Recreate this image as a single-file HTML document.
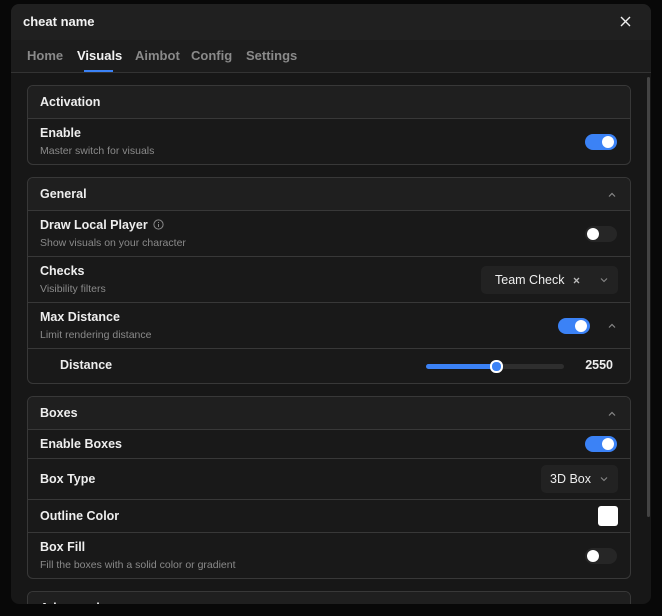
<!DOCTYPE html><html><head><style>
body{margin:0;width:662px;height:616px;background:#080808;font-family:"Liberation Sans",sans-serif;position:relative;overflow:hidden;color:#eee}
.win{position:absolute;left:11px;top:4px;width:640px;height:600px;background:#171717;border-radius:8px;overflow:hidden}
.title{height:36px;background:#202020;font-size:13px;font-weight:bold;line-height:36px;padding-left:12px;color:#f2f2f2;position:relative}
.x{position:absolute;right:20px;top:12px}
.tabs{height:32px;background:#1c1c1c;border-bottom:1px solid #333;position:relative;font-size:13px;font-weight:bold}
.tabs span{position:absolute;top:8px;color:#8a8a8a}
.tabs .a{color:#f2f2f2}
.ul{position:absolute;left:73px;top:30px;width:29px;height:2px;background:#3b82f6}
.card{position:absolute;left:16px;width:602px;border:1px solid #383838;border-radius:6px;background:#191919;overflow:hidden}
.hd{height:32px;background:#1f1f1f;border-bottom:1px solid #383838;font-size:12.5px;font-weight:bold;line-height:32px;padding-left:12px;position:relative}
.row{position:relative;border-bottom:1px solid #383838;padding-left:12px}
.row:last-child{border-bottom:none}
.t{font-size:12.5px;font-weight:bold;color:#eee;position:absolute;left:12px}
.s{font-size:10.5px;color:#8a8a8a;position:absolute;left:12px}
.tg{position:absolute;right:13px;width:32px;height:16px;border-radius:8px;background:#3b82f6}
.tg::after{content:"";position:absolute;right:3px;top:2px;width:12px;height:12px;border-radius:6px;background:#fff}
.tg.off{background:#262626}
.tg.off::after{left:2px;right:auto}
.car{position:absolute;right:14px;width:8px;height:5px}
</style></head><body>
<div class="win">
<div class="title">cheat name<svg class="x" width="11" height="11" viewBox="0 0 11 11"><path d="M1 1L10 10M10 1L1 10" stroke="#eee" stroke-width="1.4"/></svg></div>
<div class="tabs"><span style="left:16px">Home</span><span class="a" style="left:66px">Visuals</span><span style="left:124px">Aimbot</span><span style="left:180px">Config</span><span style="left:235px">Settings</span><div class="ul"></div></div>

<div class="card" style="top:81px;height:78px">
<div class="hd">Activation</div>
<div class="row" style="height:45px"><div class="t" style="top:7px">Enable</div><div class="s" style="top:26px">Master switch for visuals</div><div class="tg" style="top:15px"></div></div>
</div>

<div class="card" style="top:173px;height:205px">
<div class="hd">General<svg class="car" style="top:14px" viewBox="0 0 8 5"><path d="M1 4.5L4 1.5L7 4.5" fill="none" stroke="#888" stroke-width="1.2"/></svg></div>
<div class="row" style="height:45px"><div class="t" style="top:7px">Draw Local Player <svg width="11" height="11" viewBox="0 0 11 11" style="vertical-align:-1px;margin-left:2px"><circle cx="5.5" cy="5.5" r="4.6" fill="none" stroke="#888"/><path d="M5.5 5v3M5.5 3v1" stroke="#888"/></svg></div><div class="s" style="top:26px">Show visuals on your character</div><div class="tg off" style="top:15px"></div></div>
<div class="row" style="height:45px"><div class="t" style="top:7px">Checks</div><div class="s" style="top:26px">Visibility filters</div>
<div style="position:absolute;right:12px;top:9px;width:137px;height:28px;background:#222;border-radius:5px;font-size:12.5px;line-height:28px;color:#eee"><span style="position:absolute;left:14px">Team Check</span><svg style="position:absolute;left:92px;top:11px" width="7" height="7" viewBox="0 0 7 7"><path d="M1 1L6 6M6 1L1 6" stroke="#bbb" stroke-width="1.3"/></svg><svg style="position:absolute;left:119px;top:12px" width="8" height="5" viewBox="0 0 8 5"><path d="M1 .5L4 3.5L7 .5" fill="none" stroke="#888" stroke-width="1.1"/></svg></div></div>
<div class="row" style="height:45px"><div class="t" style="top:7px">Max Distance</div><div class="s" style="top:26px">Limit rendering distance</div><div class="tg" style="top:15px;right:40px"></div><svg class="car" style="top:20px" viewBox="0 0 8 5"><path d="M1 4.5L4 1.5L7 4.5" fill="none" stroke="#888" stroke-width="1.2"/></svg></div>
<div class="row" style="height:35px"><div class="t" style="top:9px;left:32px;font-weight:bold">Distance</div>
<div style="position:absolute;left:398px;top:15px;width:138px;height:5px;border-radius:3px;background:#2e2e2e"><div style="width:70px;height:5px;border-radius:3px;background:#3b82f6"></div><div style="position:absolute;left:64px;top:-4px;width:9px;height:9px;border-radius:6px;background:#3b82f6;border:2px solid #fff"></div></div>
<div style="position:absolute;right:17px;top:9px;font-size:12.5px;font-weight:bold">2550</div></div>
</div>

<div class="card" style="top:392px;height:181px">
<div class="hd">Boxes<svg class="car" style="top:14px" viewBox="0 0 8 5"><path d="M1 4.5L4 1.5L7 4.5" fill="none" stroke="#888" stroke-width="1.2"/></svg></div>
<div class="row" style="height:28px"><div class="t" style="top:7px">Enable Boxes</div><div class="tg" style="top:6px"></div></div>
<div class="row" style="height:40px"><div class="t" style="top:13px">Box Type</div><div style="position:absolute;right:12px;top:6px;width:77px;height:28px;background:#222;border-radius:5px;font-size:12.5px;line-height:28px"><span style="position:absolute;left:9px">3D Box</span><svg style="position:absolute;left:59px;top:12px" width="8" height="5" viewBox="0 0 8 5"><path d="M1 .5L4 3.5L7 .5" fill="none" stroke="#888" stroke-width="1.1"/></svg></div></div>
<div class="row" style="height:32px"><div class="t" style="top:9px">Outline Color</div><div style="position:absolute;right:12px;top:6px;width:20px;height:20px;border-radius:3px;background:#fff"></div></div>
<div class="row" style="height:45px"><div class="t" style="top:7px">Box Fill</div><div class="s" style="top:26px">Fill the boxes with a solid color or gradient</div><div class="tg off" style="top:15px"></div></div>
</div>

<div class="card" style="top:587px;height:40px"><div class="hd" style="background:#1f1f1f">Advanced</div></div>
<div style="position:absolute;right:1px;top:73px;width:3px;height:440px;background:#444;border-radius:2px"></div>
</div>
</body></html>
